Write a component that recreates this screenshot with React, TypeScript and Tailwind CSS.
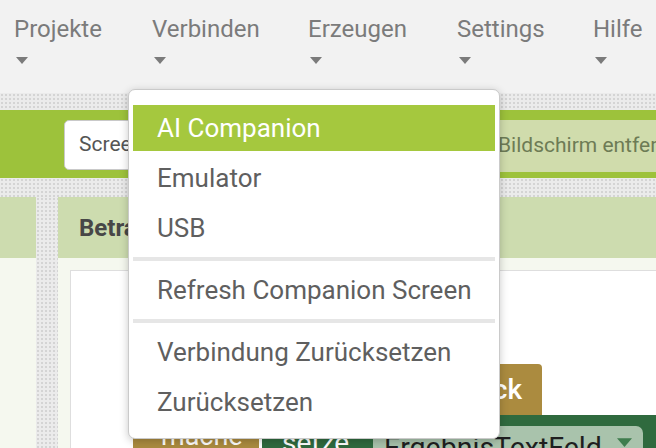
import React from 'react';

const topMenu = [
  { label: 'Projekte', w: 'w-[138px]' },
  { label: 'Verbinden', w: 'w-[156px]' },
  { label: 'Erzeugen', w: 'w-[149px]' },
  { label: 'Settings', w: 'w-[136px]' },
  { label: 'Hilfe', w: 'w-[60px]' },
];

const Caret: React.FC<{ className?: string; w?: number; h?: number }> = ({ className, w = 12, h = 7 }) => (
  <svg width={w} height={h} viewBox="0 0 12 7" className={className}>
    <path d="M0 0 H12 L6 7 Z" fill="currentColor" />
  </svg>
);

const Dotted: React.FC<{ className?: string }> = ({ className }) => (
  <div
    className={`bg-[#ebebeb] bg-[radial-gradient(#d4d4d4_1px,transparent_1.3px)] bg-[size:4px_4px] ${className ?? ''}`}
  />
);

const App: React.FC = () => {
  return (
    <div className="relative w-[656px] h-[448px] overflow-hidden bg-white font-['Roboto',sans-serif]">
      {/* top menu bar */}
      <header className="h-[93px] bg-[#f2f2f2] flex pl-[14px]">
        {topMenu.map((m) => (
          <div key={m.label} className={`${m.w} shrink-0 flex flex-col pt-[15px] text-[#7b7b7b]`}>
            <span className="text-[24px] leading-[28px]">{m.label}</span>
            <Caret className="mt-[14px] ml-[2px]" />
          </div>
        ))}
      </header>

      <Dotted className="h-[17px]" />

      {/* green toolbar */}
      <div className="h-[68px] bg-[#9dc23b] flex items-start pt-[10px]">
        <button className="ml-[64px] w-[150px] h-[50px] shrink-0 bg-white border border-[#c9c9c9] rounded-[5px] text-left pl-[14px] text-[21px] text-[#555]">
          Screen1 ▾
        </button>
        <button className="ml-[8px] w-[256px] h-[50px] shrink-0 bg-white border border-[#c9c9c9] rounded-[5px] text-left pl-[14px] text-[21px] text-[#555]">
          Bildschirm hinzufügen ...
        </button>
        <button className="ml-[8px] w-[240px] h-[52px] shrink-0 bg-[#d0dcac] rounded-[5px] text-left pl-[12px] text-[21px] text-[#6d7b55]">
          Bildschirm entfernen
        </button>
      </div>

      <Dotted className="h-[19px]" />

      {/* panels */}
      <div className="flex h-[251px]">
        <div className="w-[36px] shrink-0 flex flex-col">
          <div className="h-[61px] bg-[#cddcaf]" />
          <div className="flex-1 bg-[#f5f8ef]" />
        </div>
        <Dotted className="w-[22px] shrink-0" />
        <div className="flex-1 flex flex-col">
          <div className="h-[61px] bg-[#cddcaf] flex items-center pl-[21px] text-[24px] font-bold text-[#474747]">
            Betrachter
          </div>
          <div className="flex-1 bg-[#f5f8ef] pl-[12px] pt-[12px]">
            <div className="relative h-full bg-white border-t border-l border-[#dedede]">
              {/* event block */}
              <div className="absolute left-[62px] top-[93px] w-[409px] h-[52px] bg-[#ab8b3f] rounded-t-[4px] flex items-center justify-end pr-[20px] text-white text-[28px] font-medium whitespace-nowrap">
                wenn Knopf.Klick
              </div>
              <div className="absolute left-[62px] top-[144px] w-[126px] h-[40px] bg-[#ab8b3f] flex items-start pl-[28px] pt-[1px] text-white text-[27px]">
                mache
              </div>
              <div className="absolute left-[191px] top-[144px] w-[420px] h-[40px] bg-[#2f6a3e] flex items-start pl-[20px] pt-[7px] text-white text-[28px]">
                setze
              </div>
              <div className="absolute left-[302px] top-[155px] w-[270px] h-[36px] bg-[#a9c3ac] rounded-[7px] flex items-start pl-[11px] pt-[1px] text-[#1f1f1f] text-[28.5px] whitespace-nowrap">
                ErgebnisTextFeld
                <Caret className="absolute right-[11px] top-[12px] text-[#3f7d4e]" w={15} h={9} />
              </div>
            </div>
          </div>
        </div>
      </div>

      {/* Verbinden dropdown */}
      <div className="absolute left-[128px] top-[89px] w-[372px] bg-white border border-[#cacaca] rounded-[7px] shadow-[0_2px_8px_rgba(0,0,0,0.22)] pt-[13px] pb-[11px] px-[4px] text-[26px] text-[#5f5f5f]">
        <div className="h-[50px] py-[2px]">
          <div className="h-full bg-[#a5c83e] text-white flex items-center pl-[24px] leading-[28px]">AI Companion</div>
        </div>
        <div className="h-[50px] flex items-center pl-[24px] leading-[28px]">Emulator</div>
        <div className="h-[50px] flex items-center pl-[24px] leading-[28px]">USB</div>
        <div className="py-[4px]">
          <div className="h-[4px] bg-[#e6e6e6]" />
        </div>
        <div className="h-[50px] flex items-center pl-[24px] leading-[28px]">Refresh Companion Screen</div>
        <div className="py-[4px]">
          <div className="h-[4px] bg-[#e6e6e6]" />
        </div>
        <div className="h-[50px] flex items-center pl-[24px] leading-[28px]">Verbindung Zurücksetzen</div>
        <div className="h-[50px] flex items-center pl-[24px] leading-[28px]">Zurücksetzen</div>
      </div>
    </div>
  );
};

export default App;
